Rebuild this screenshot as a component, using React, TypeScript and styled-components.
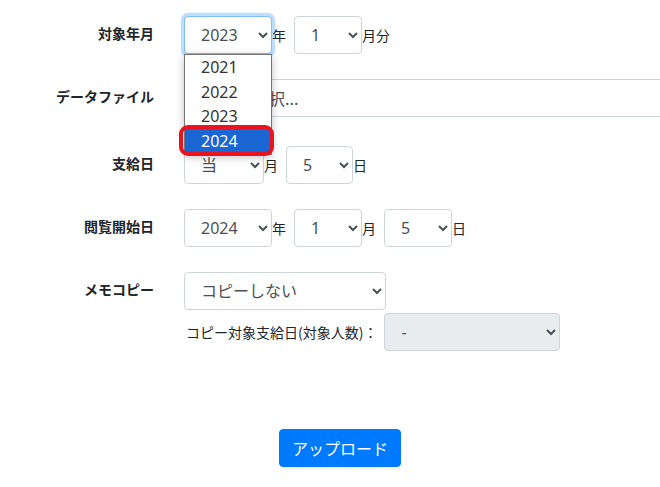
import React from 'react'
import styled, { createGlobalStyle, css } from 'styled-components'

const GlobalStyle = createGlobalStyle`
  html, body {
    margin: 0;
    padding: 0;
    background: #fff;
    overflow: hidden;
  }
  body {
    font-family: "Noto Sans", "Noto Sans CJK JP", sans-serif;
    color: #212529;
    font-size: 16px;
  }
`

const Page = styled.div`
  padding-top: 16px;
  width: 900px;
`

const FormRow = styled.div<{ $spacing?: number }>`
  display: grid;
  grid-template-columns: 154px 1fr;
  column-gap: 30px;
  align-items: start;
  margin-bottom: ${({ $spacing }) => $spacing ?? 25}px;
`

const Label = styled.div`
  text-align: right;
  font-family: "Noto Sans CJK JP", sans-serif;
  font-weight: 700;
  font-size: 14px;
  line-height: 21px;
  padding-top: 7px;
`

const Controls = styled.div`
  display: flex;
  align-items: center;
`

const Stack = styled.div`
  display: flex;
  flex-direction: column;
  align-items: flex-start;
`

const Unit = styled.span`
  font-family: "Noto Sans CJK JP", sans-serif;
  font-size: 14px;
  margin-right: 8px;
  line-height: 21px;
`

const SelectWrap = styled.div`
  position: relative;
  z-index: 5;
`

const Select = styled.select<{ $width: number; $focused?: boolean }>`
  width: ${({ $width }) => $width}px;
  height: 38px;
  box-sizing: border-box;
  padding: 6px 8px 6px 12px;
  font-family: "Noto Sans", "Noto Sans CJK JP", sans-serif;
  font-size: 16px;
  line-height: 24px;
  color: #495057;
  background: #fff;
  border: 1px solid #ced4da;
  border-radius: 4px;
  outline: none;
  display: block;
  ${({ $focused }) =>
    $focused &&
    css`
      border-color: #80bdff;
      box-shadow: 0 0 0 3.2px rgba(0, 123, 255, 0.25);
    `}
  &:disabled {
    background-color: #e9ecef;
    opacity: 1;
    color: #495057;
  }
`

const FileBox = styled.div`
  width: 560px;
  height: 38px;
  box-sizing: border-box;
  border: 1px solid #ced4da;
  border-radius: 4px;
  padding: 6px 12px 6px 4px;
  font-family: "Noto Sans CJK JP", sans-serif;
  font-size: 16px;
  line-height: 24px;
  color: #495057;
`

const SubRow = styled.div`
  display: flex;
  align-items: center;
  margin-top: 3px;
`

const SubLabel = styled.span`
  font-family: "Noto Sans CJK JP", sans-serif;
  font-size: 14px;
  line-height: 21px;
  padding-left: 2px;
  margin-right: 7px;
`

const Footer = styled.div`
  padding-left: 279px;
  margin-top: 78px;
`

const Button = styled.button`
  height: 38px;
  padding: 6px 12px;
  font-family: "Noto Sans CJK JP", sans-serif;
  font-size: 16px;
  line-height: 24px;
  color: #fff;
  background: #007bff;
  border: 1px solid #007bff;
  border-radius: 4px;
`

const Popup = styled.ul`
  position: absolute;
  z-index: 10;
  top: 38px;
  left: 0;
  width: 88px;
  box-sizing: border-box;
  margin: 0;
  padding: 0;
  list-style: none;
  background: #fff;
  border: 1px solid #767676;
  box-shadow: 0 2px 8px rgba(0, 0, 0, 0.25);
`

const PopupItem = styled.li<{ $active?: boolean }>`
  position: relative;
  height: 24.7px;
  line-height: 24.7px;
  padding-left: 16px;
  font-size: 16px;
  color: #333;
  ${({ $active }) =>
    $active &&
    css`
      background: #1a66d2;
      color: #fff;
      &::after {
        content: '';
        position: absolute;
        top: -4px;
        bottom: -2px;
        left: -6px;
        right: -3px;
        border: 4px solid #e8141f;
        border-radius: 9px;
      }
    `}
`

const years = ['2021', '2022', '2023', '2024']

const App = () => {
  return (
    <Page>
      <GlobalStyle />
      <FormRow>
        <Label>対象年月</Label>
        <Controls>
          <SelectWrap>
            <Select $width={88} $focused defaultValue="2023">
              {years.map((y) => (
                <option key={y}>{y}</option>
              ))}
            </Select>
            <Popup>
              {years.map((y) => (
                <PopupItem key={y} $active={y === '2024'}>
                  {y}
                </PopupItem>
              ))}
            </Popup>
          </SelectWrap>
          <Unit>年</Unit>
          <Select $width={68} defaultValue="1">
            <option>1</option>
          </Select>
          <Unit>月分</Unit>
        </Controls>
      </FormRow>

      <FormRow $spacing={29}>
        <Label>データファイル</Label>
        <FileBox>ファイル選択...</FileBox>
      </FormRow>

      <FormRow>
        <Label>支給日</Label>
        <Controls>
          <Select $width={80} defaultValue="当">
            <option>当</option>
          </Select>
          <Unit>月</Unit>
          <Select $width={67} defaultValue="5">
            <option>5</option>
          </Select>
          <Unit>日</Unit>
        </Controls>
      </FormRow>

      <FormRow>
        <Label>閲覧開始日</Label>
        <Controls>
          <Select $width={88} defaultValue="2024">
            {years.map((y) => (
              <option key={y}>{y}</option>
            ))}
          </Select>
          <Unit>年</Unit>
          <Select $width={68} defaultValue="1">
            <option>1</option>
          </Select>
          <Unit>月</Unit>
          <Select $width={68} defaultValue="5">
            <option>5</option>
          </Select>
          <Unit>日</Unit>
        </Controls>
      </FormRow>

      <FormRow $spacing={0}>
        <Label>メモコピー</Label>
        <Stack>
          <Select $width={202} defaultValue="none">
            <option value="none">コピーしない</option>
          </Select>
          <SubRow>
            <SubLabel>コピー対象支給日(対象人数)：</SubLabel>
            <Select $width={176} disabled defaultValue="-">
              <option>-</option>
            </Select>
          </SubRow>
        </Stack>
      </FormRow>

      <Footer>
        <Button>アップロード</Button>
      </Footer>
    </Page>
  )
}

export default App
